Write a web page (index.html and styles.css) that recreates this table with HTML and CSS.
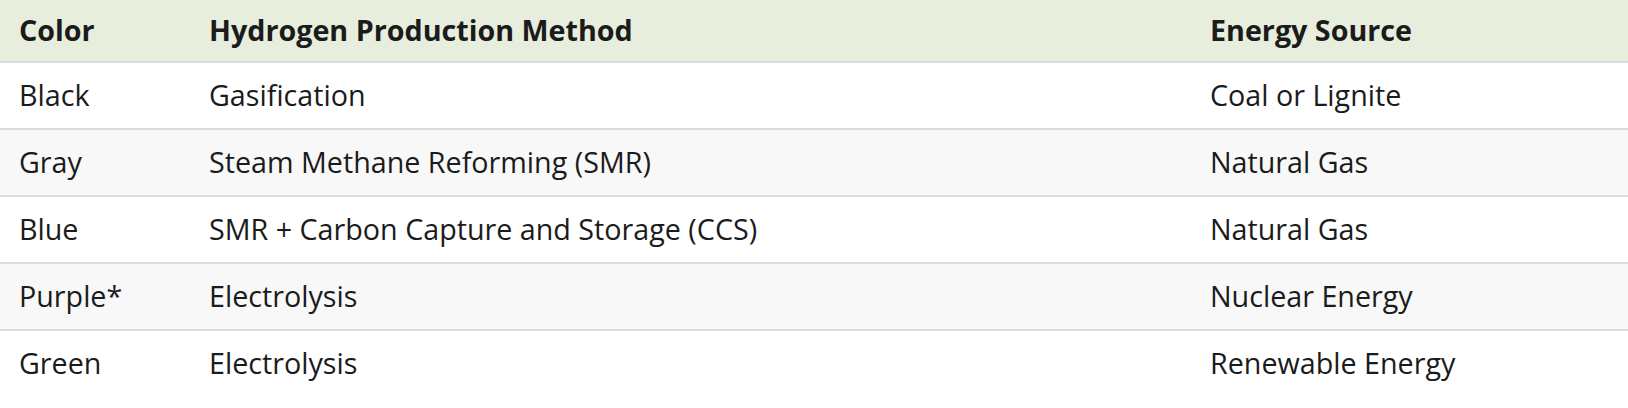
FILE: index.html
```html
<!DOCTYPE html>
<html lang="en">
<head>
<meta charset="utf-8">
<title>Hydrogen Colors</title>
<link rel="stylesheet" href="styles.css">
</head>
<body>
<table class="h2-table">
  <colgroup>
    <col class="col-color">
    <col class="col-method">
    <col class="col-source">
  </colgroup>
  <thead>
    <tr>
      <th>Color</th>
      <th>Hydrogen Production Method</th>
      <th>Energy Source</th>
    </tr>
  </thead>
  <tbody>
    <tr><td>Black</td><td>Gasification</td><td>Coal or Lignite</td></tr>
    <tr><td>Gray</td><td>Steam Methane Reforming (SMR)</td><td>Natural Gas</td></tr>
    <tr><td>Blue</td><td>SMR + Carbon Capture and Storage (CCS)</td><td>Natural Gas</td></tr>
    <tr><td>Purple*</td><td>Electrolysis</td><td>Nuclear Energy</td></tr>
    <tr><td>Green</td><td>Electrolysis</td><td>Renewable Energy</td></tr>
  </tbody>
</table>
</body>
</html>
```
FILE: styles.css
```css
html, body {
  margin: 0;
  padding: 0;
  background: #ffffff;
}
body {
  font-family: "Open Sans", "Liberation Sans", sans-serif;
  color: #1b1b1b;
}
.h2-table {
  width: 100%;
  border-collapse: collapse;
  table-layout: fixed;
  font-size: 28.7px;
  line-height: 42px;
}
.col-color { width: 190px; }
.col-method { width: 1001px; }
.h2-table th {
  text-align: left;
  font-weight: 700;
  background: #e7eedd;
  padding: 9px 19px 10px;
  border-bottom: 2px solid #dcdcdc;
}
.h2-table td {
  padding: 11px 19px 12px;
  font-weight: 400;
  border-bottom: 2px solid #dcdcdc;
}
.h2-table tbody tr:nth-child(even) td {
  background: #f8f8f8;
}
.h2-table tbody tr:last-child td {
  border-bottom: none;
}
```
